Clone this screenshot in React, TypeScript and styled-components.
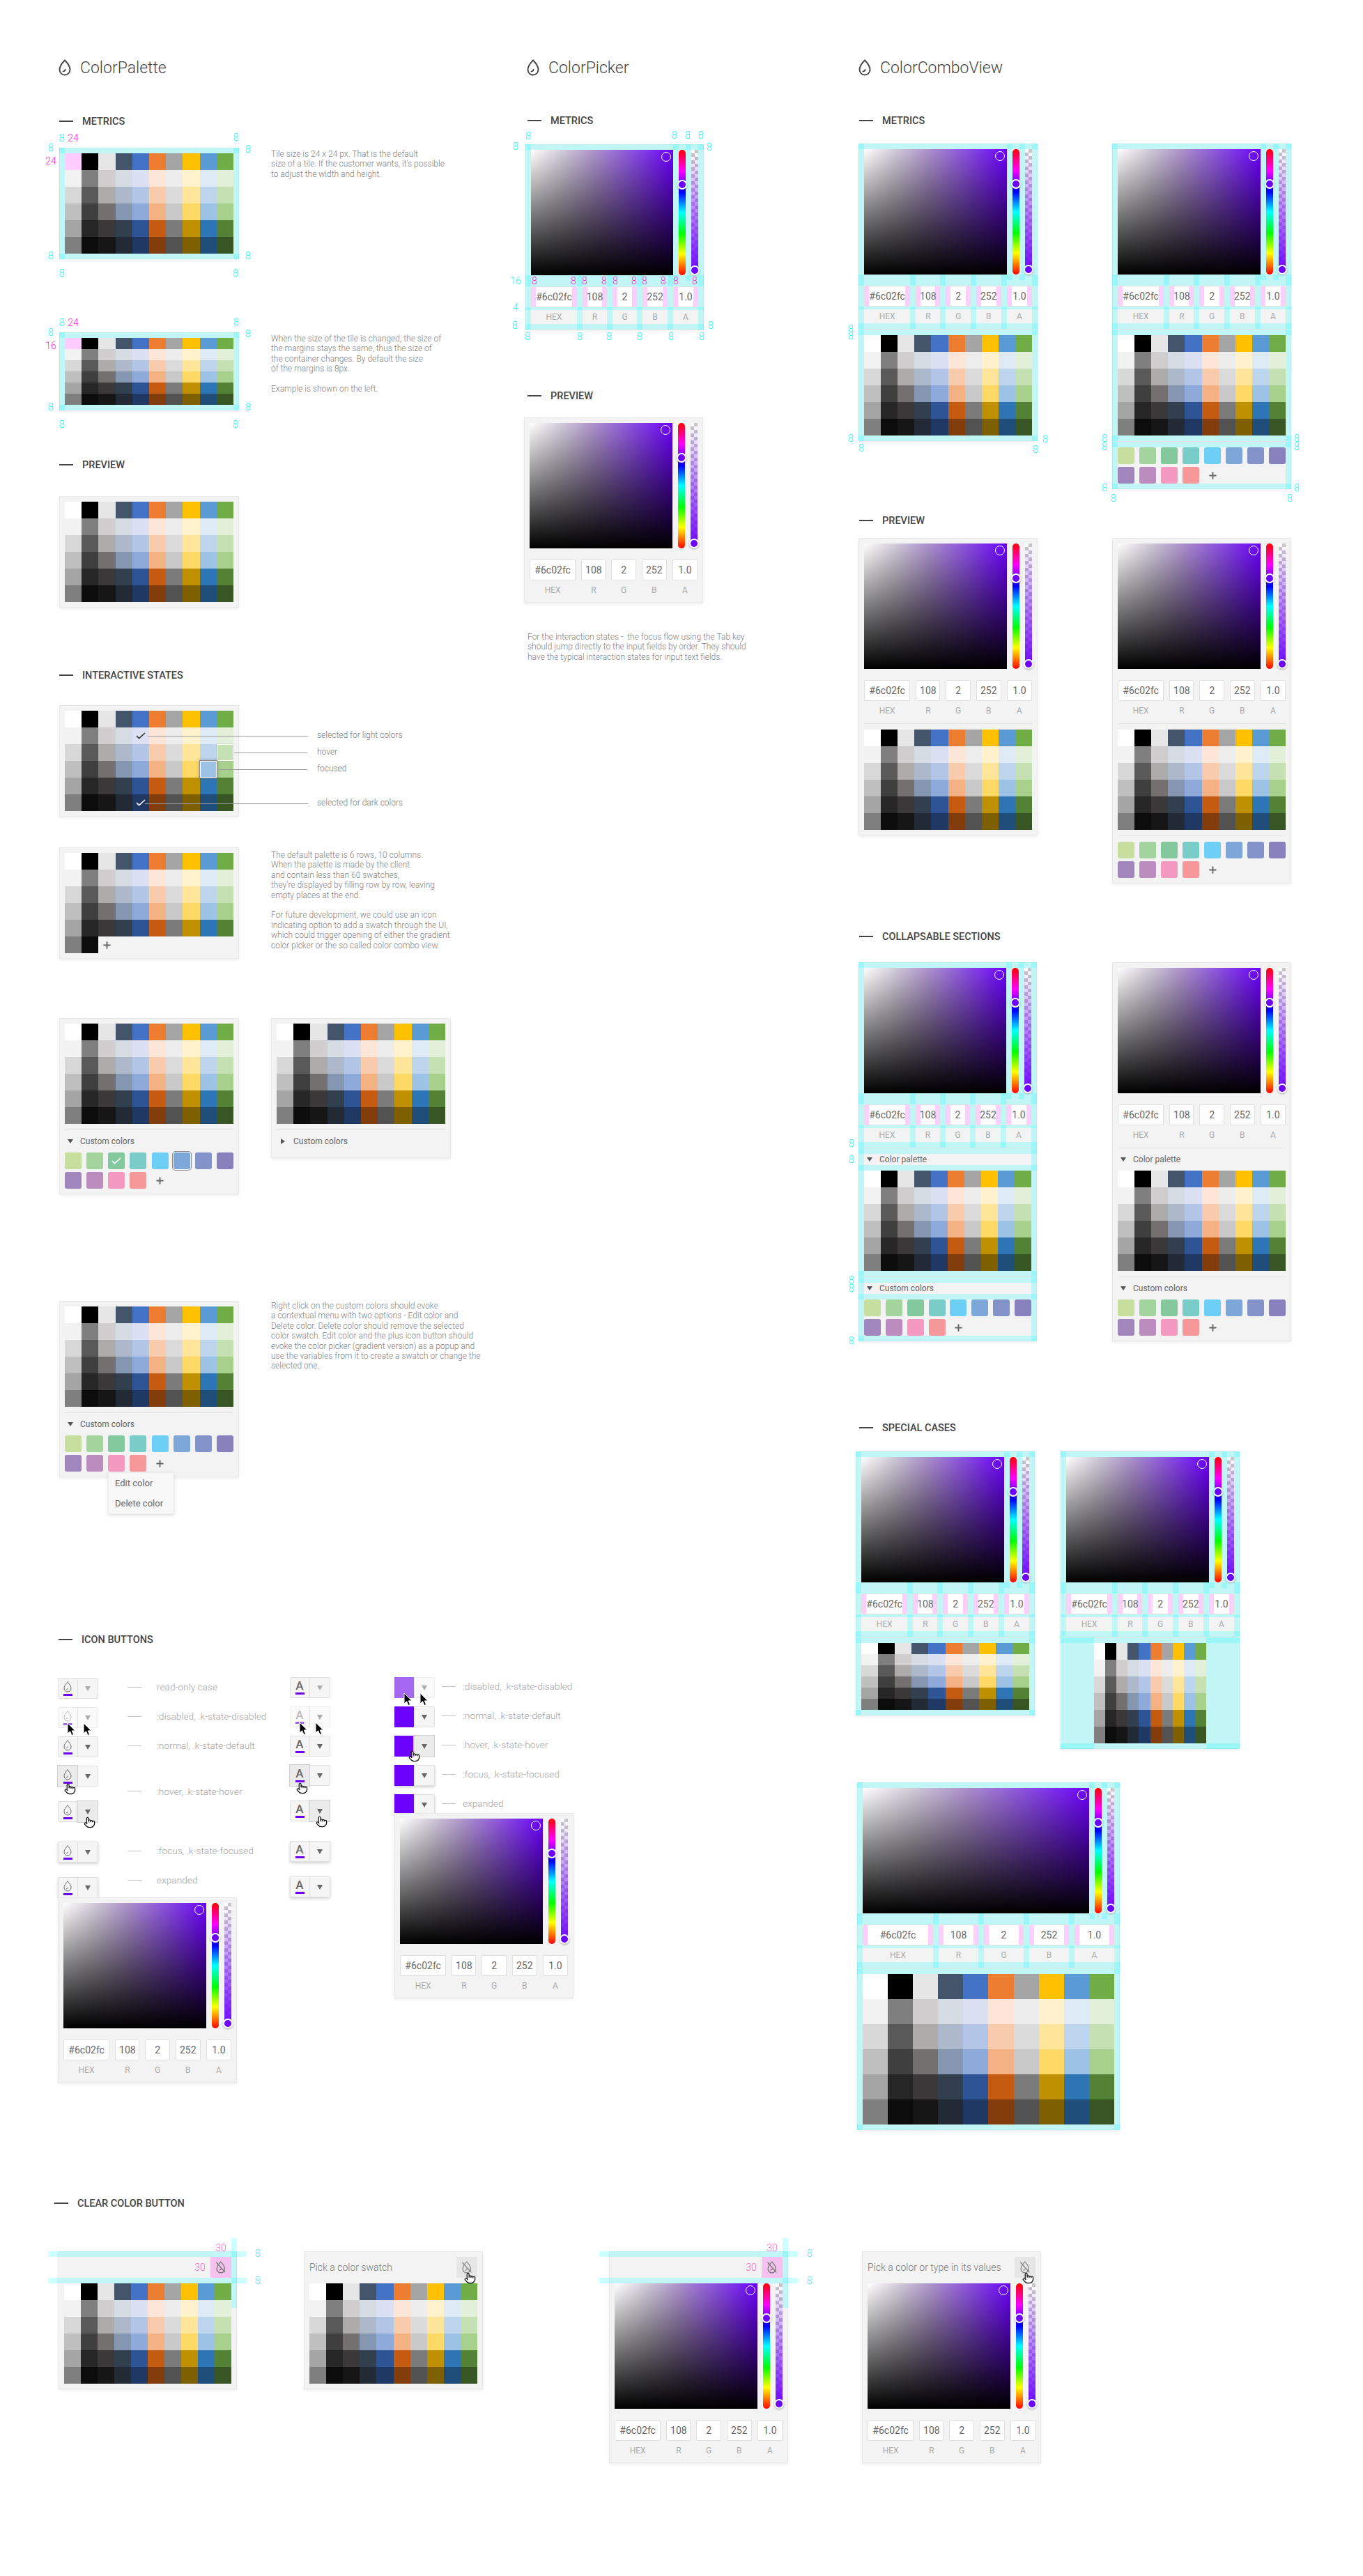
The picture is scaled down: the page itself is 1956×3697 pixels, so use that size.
import * as React from 'react';
import styled, { createGlobalStyle } from 'styled-components';
import { Plus, Pointer } from 'lucide-react';

const GlobalStyle = createGlobalStyle`
  html, body { margin: 0; padding: 0; background: #fff; }
  body { font-family: Roboto, "Liberation Sans", sans-serif; }
  * { box-sizing: border-box; }
`;

const PURPLE = '#6c02fc';
const PALETTE = [
  ['#ffffff', '#000000', '#e7e6e6', '#44546a', '#4472c4', '#ed7d31', '#a5a5a5', '#ffc000', '#5b9bd5', '#70ad47'],
  ['#f2f2f2', '#7f7f7f', '#d0cece', '#d6dce4', '#dbe1f3', '#fde5d8', '#ededed', '#fff2cc', '#deeaf6', '#e2efd9'],
  ['#d8d8d8', '#595959', '#aeabab', '#adb9ca', '#b4c6e7', '#f7cbac', '#dbdbdb', '#fee599', '#bdd6ee', '#c5e0b3'],
  ['#bfbfbf', '#3f3f3f', '#757070', '#8496b0', '#8eaadb', '#f4b183', '#c9c9c9', '#ffd965', '#9cc2e5', '#a8d08d'],
  ['#a5a5a5', '#262626', '#3a3838', '#323f4f', '#2f5496', '#c55a11', '#7b7b7b', '#bf9000', '#2e75b5', '#538135'],
  ['#7f7f7f', '#0c0c0c', '#171616', '#222a35', '#1f3864', '#833c0b', '#525252', '#7f6000', '#1e4e79', '#375623'],
];
const CUSTOM = ['#c6df9e', '#a3d49e', '#84c99e', '#7accc8', '#6dcff6', '#7da7d9', '#8393ca', '#8781bd', '#a186be', '#bd8cbf', '#f49ac1', '#f69799'];
const DEFAULT_FIELDS = [66, 35, 35, 36, 36];
const GRAD_H = 180;
const LABEL_END = GRAD_H + 78;

const Board = styled.div`
  width: 1956px;
  height: 3697px;
  overflow: hidden;
  padding: 84px 0 0 78px;
  background: #fff;
`;

const MainArea = styled.div`
  display: flex;
  align-items: flex-start;
`;

const LeftArea = styled.div`
  width: 1154px;
  flex: none;
`;

const TopColumns = styled.div`
  display: flex;
  align-items: flex-start;
`;

const PaletteColumn = styled.div`
  width: 676px;
  flex: none;
  padding-left: 7px;
`;

const PickerColumn = styled.div`
  flex: 1;
`;

const ComboColumn = styled.div`
  flex: 1;
`;

const TitleRow = styled.div<{ $indent?: number }>`
  display: flex;
  align-items: center;
  gap: 13px;
  height: 26px;
  margin-left: ${(p) => p.$indent ?? 0}px;
  font-size: 23px;
  font-weight: 300;
  color: #444;
`;

const Heading = styled.div<{ $mt: number; $indent?: number }>`
  display: flex;
  align-items: center;
  gap: 13px;
  height: 18px;
  margin-top: ${(p) => p.$mt}px;
  margin-left: ${(p) => p.$indent ?? 0}px;
  font-size: 14.5px;
  font-weight: 500;
  color: #444;
  white-space: nowrap;
  &::before {
    content: '';
    width: 20px;
    height: 2px;
    background: #444;
  }
`;

const Row = styled.div<{ $mt: number; $gap?: number; $indent?: number }>`
  display: flex;
  align-items: flex-start;
  gap: ${(p) => p.$gap ?? 46}px;
  margin-top: ${(p) => p.$mt}px;
  margin-left: ${(p) => p.$indent ?? 0}px;
`;

const Note = styled.div<{ $pt?: number; $mt?: number; $indent?: number }>`
  padding-top: ${(p) => p.$pt ?? 0}px;
  margin-top: ${(p) => p.$mt ?? 0}px;
  margin-left: ${(p) => p.$indent ?? 0}px;
  font-size: 12px;
  line-height: 14.4px;
  font-weight: 300;
  color: #808080;
  white-space: pre;
`;

const Overlay = styled.div<{ $l: number; $t: number }>`
  position: absolute;
  left: ${(p) => p.$l}px;
  top: ${(p) => p.$t}px;
`;

const Dim = styled(Overlay)<{ $tone: 'cyan' | 'pink' | 'soft' | 'sky' }>`
  font-size: 14px;
  font-weight: 300;
  line-height: 16px;
  transform: translate(-50%, -50%);
  color: ${(p) => ({ cyan: '#22f4f4', pink: '#ff28d8', soft: '#ff66cc', sky: '#66e0ff' })[p.$tone]};
`;

const Card = styled.div<{ $w: number; $mt?: number; $indent?: number }>`
  position: relative;
  flex: none;
  width: ${(p) => p.$w}px;
  margin-top: ${(p) => p.$mt ?? 0}px;
  margin-left: ${(p) => p.$indent ?? 0}px;
  display: flex;
  flex-direction: column;
  padding: 8px;
  background: #f3f3f3;
  box-shadow: inset 0 0 0 1px #e9e9e9, 0 2px 4px rgba(0, 0, 0, 0.07);
`;

const Strip = styled.div<{ $l: number; $t: number; $w: number; $h: number }>`
  position: absolute;
  left: ${(p) => p.$l}px;
  top: ${(p) => p.$t}px;
  width: ${(p) => p.$w}px;
  height: ${(p) => p.$h}px;
  background: rgba(0, 255, 255, 0.2);
  pointer-events: none;
`;

const TileGrid = styled.div<{ $rowH: number; $w?: number }>`
  display: grid;
  grid-template-columns: repeat(10, 1fr);
  grid-auto-rows: ${(p) => p.$rowH}px;
  ${(p) => (p.$w ? `width: ${p.$w}px; align-self: center;` : '')}
`;

const Tile = styled.div<{ $color: string; $state?: 'hover' | 'focus' }>`
  position: relative;
  display: flex;
  align-items: center;
  justify-content: center;
  background: ${(p) => p.$color};
  ${(p) => p.$state === 'hover' && 'z-index: 1; box-shadow: inset 0 0 0 1px #fff, 0 0 0 1px rgba(150,150,150,0.25);'}
  ${(p) => p.$state === 'focus' && 'z-index: 1; box-shadow: inset 0 0 0 1px #fff, 0 0 0 1px #888, 0 0 4px 2px rgba(110,110,110,0.35);'}
`;

const PlusCell = styled.div`
  display: flex;
  align-items: center;
  justify-content: center;
  color: #666;
`;

const PickerTop = styled.div`
  display: flex;
  gap: 8px;
  height: ${GRAD_H}px;
  margin-bottom: 16px;
`;

const Gradient = styled.div`
  position: relative;
  flex: 1;
  background: linear-gradient(to top, #000, rgba(0, 0, 0, 0)),
    linear-gradient(to right, #fff 0%, #d2cbda 22%, #ad92cc 45%, #8b4fe0 72%, ${PURPLE} 100%);
`;

const Selector = styled.div`
  position: absolute;
  top: 3px;
  right: 3px;
  width: 14px;
  height: 14px;
  border-radius: 50%;
  border: 1px solid #fff;
`;

const Hue = styled.div`
  position: relative;
  width: 10px;
  border-radius: 5px;
  background: linear-gradient(to bottom, #f00 0%, #f0f 17%, #00f 34%, #0ff 50%, #0f0 67%, #ff0 83%, #f00 100%);
`;

const Alpha = styled.div`
  position: relative;
  width: 10px;
  border-radius: 0 0 5px 5px;
  background: linear-gradient(to bottom, rgba(108, 2, 252, 0) 0%, ${PURPLE} 100%),
    repeating-conic-gradient(#c8c8c8 0 25%, #fff 0 50%) 0 0 / 10px 10px;
`;

const Thumb = styled.div<{ $top: number }>`
  position: absolute;
  left: -2px;
  top: ${(p) => p.$top}px;
  width: 14px;
  height: 14px;
  border-radius: 50%;
  border: 2.5px solid #fff;
  background: ${PURPLE};
  box-shadow: 0 1px 3px rgba(0, 0, 0, 0.3);
`;

const FieldRow = styled.div<{ $cols: string }>`
  display: grid;
  grid-template-columns: ${(p) => p.$cols};
  column-gap: 8px;
`;

const Field = styled.div<{ $spec?: boolean }>`
  height: 30px;
  margin-bottom: 4px;
  display: flex;
  align-items: center;
  justify-content: center;
  background: #fff;
  border: 1px solid #e0e0e0;
  border-radius: 2px;
  font-size: 14px;
  color: #666;
  ${(p) => p.$spec && 'box-shadow: inset 6px 0 0 #fccfff, inset -6px 0 0 #fccfff;'}
`;

const FieldLabel = styled.div`
  height: 20px;
  line-height: 20px;
  text-align: center;
  font-size: 12px;
  color: #aaa;
`;

const Rule = styled.div`
  height: 1px;
  margin: 8px 0;
  background: #e2e2e2;
`;

const Disclosure = styled.div<{ $open?: boolean }>`
  display: flex;
  align-items: center;
  gap: 10px;
  height: 16px;
  margin-bottom: 8px;
  padding-left: 4px;
  font-size: 12px;
  color: #666;
  background: #f3f3f3;
  &::before {
    content: '';
    width: 0;
    height: 0;
    ${(p) =>
      p.$open
        ? 'border-left: 4px solid transparent; border-right: 4px solid transparent; border-top: 6px solid #555;'
        : 'margin: 0 2px; border-top: 4px solid transparent; border-bottom: 4px solid transparent; border-left: 6px solid #555;'}
  }
`;

const SwatchGrid = styled.div`
  display: grid;
  grid-template-columns: repeat(8, 24px);
  grid-auto-rows: 24px;
  justify-content: space-between;
  row-gap: 4px;
`;

const Swatch = styled.div<{ $color: string; $focused?: boolean }>`
  display: flex;
  align-items: center;
  justify-content: center;
  border-radius: 3px;
  background: ${(p) => p.$color};
  ${(p) => p.$focused && 'box-shadow: 0 0 0 1px #fff, 0 0 0 2px #888;'}
`;

const ContextMenu = styled(Overlay)`
  width: 95px;
  height: 60px;
  z-index: 2;
  display: flex;
  flex-direction: column;
  justify-content: space-around;
  padding: 0 9px;
  background: #f8f8f8;
  border: 1px solid #ececec;
  box-shadow: 0 2px 5px rgba(0, 0, 0, 0.12);
  font-size: 13px;
  color: #666;
`;

const Leader = styled(Overlay)<{ $w: number }>`
  width: ${(p) => p.$w}px;
  height: 1px;
  background: #999;
  z-index: 1;
`;

const CalloutText = styled(Overlay)`
  font-size: 12px;
  font-weight: 300;
  line-height: 14px;
  color: #777;
  white-space: nowrap;
  transform: translateY(-50%);
`;

const StateText = styled.div<{ $before: number; $after: number; $lift?: number }>`
  display: flex;
  align-items: center;
  height: 18px;
  margin-left: ${(p) => p.$before}px;
  transform: translateY(${(p) => -(p.$lift ?? 2)}px);
  font-size: 13.7px;
  font-weight: 300;
  color: #a3a3a3;
  white-space: nowrap;
  &::before {
    content: '';
    width: 20px;
    height: 1px;
    background: #c4c4c4;
    margin-right: ${(p) => p.$after}px;
  }
`;

const ButtonsArea = styled.div`
  display: grid;
  grid-template-columns: 333px 150px 1fr;
  margin-top: 45px;
  padding-left: 5px;
`;

const ButtonStack = styled.div<{ $pt?: number }>`
  display: flex;
  flex-direction: column;
  gap: 12px;
  padding-top: ${(p) => p.$pt ?? 0}px;
`;

const ButtonRow = styled.div<{ $mt?: number }>`
  display: flex;
  align-items: center;
  margin-top: ${(p) => p.$mt ?? 0}px;
`;

const HoverStack = styled.div`
  display: flex;
  flex-direction: column;
  gap: 21px;
`;

const SplitButton = styled.div<{ $raised?: boolean; $dim?: boolean }>`
  position: relative;
  flex: none;
  width: 58px;
  height: 30px;
  display: flex;
  border: 1px solid ${(p) => (p.$dim ? '#ededed' : '#e0e0e0')};
  border-radius: 2px;
  background: ${(p) => (p.$dim ? '#fafafa' : '#f5f5f5')};
  ${(p) => p.$raised && 'box-shadow: 0 2px 4px rgba(0,0,0,0.18);'}
`;

const Segment = styled.div<{ $hover?: boolean; $fill?: string }>`
  position: relative;
  flex: 1;
  display: flex;
  flex-direction: column;
  align-items: center;
  justify-content: center;
  gap: 2px;
  margin: -1px 0;
  border-left: 1px solid #e0e0e0;
  &:first-child { border-left: 0; margin-left: -1px; }
  ${(p) => p.$hover && 'background: #ebebeb; box-shadow: 0 0 0 1px #cfcfcf; z-index: 1;'}
  ${(p) => p.$fill && `background: ${p.$fill}; border-color: ${p.$fill};`}
`;

const GlyphA = styled.span<{ $dim?: boolean }>`
  font-size: 17px;
  font-weight: 500;
  line-height: 15px;
  color: ${(p) => (p.$dim ? '#bbb' : '#666')};
`;

const ColorBar = styled.span<{ $dim?: boolean }>`
  width: 13px;
  height: 3px;
  background: ${(p) => (p.$dim ? 'repeating-linear-gradient(90deg,#a566f0 0 5px,#d7bdf8 5px 7px)' : PURPLE)};
`;

const Arrow = styled.span<{ $dim?: boolean }>`
  width: 0;
  height: 0;
  border-left: 4px solid transparent;
  border-right: 4px solid transparent;
  border-top: 7px solid ${(p) => (p.$dim ? '#aaa' : '#666')};
`;

const ClearGrid = styled.div`
  display: grid;
  grid-template-columns: 352px 438px 363px 257px;
  align-items: start;
  margin: 60px 0 0 6px;
`;

const ClearHeader = styled.div`
  display: flex;
  align-items: center;
  justify-content: space-between;
  height: 30px;
  margin-bottom: 8px;
  font-size: 14px;
  font-weight: 300;
  color: #777;
`;

const ClearButton = styled.div<{ $spec?: boolean }>`
  position: relative;
  width: 30px;
  height: 30px;
  margin-left: auto;
  display: flex;
  align-items: center;
  justify-content: center;
  background: ${(p) => (p.$spec ? '#f5c2ef' : '#e6e6e6')};
`;

const CursorSpot = styled(Overlay)`
  line-height: 0;
  z-index: 3;
`;

const DropIcon = ({ size = 16, stroke = '#666', width = 1.6, slash = false }: { size?: number; stroke?: string; width?: number; slash?: boolean }) => (
  <svg width={size * 0.75} height={size} viewBox="0 0 18 24" fill="none" stroke={stroke} strokeWidth={width} strokeLinecap="round">
    <path d="M9 1.5C9 1.5 1.5 9 1.5 15a7.5 7.5 0 0 0 15 0C16.5 9 9 1.5 9 1.5z" />
    <path d="M6.5 17.5c1.6 0 2.8-.9 3-2.5" />
    {slash && <path d="M1 3l16 18" />}
  </svg>
);

const CheckMark = ({ color }: { color: string }) => (
  <svg width="14" height="10" viewBox="0 0 14 10" fill="none" stroke={color} strokeWidth="1.6">
    <path d="M1 5.2l3.6 3.4L13 1" />
  </svg>
);

const ArrowCursor = () => (
  <svg width="13" height="20" viewBox="0 0 13 20">
    <path d="M1 1v15l3.6-3.2L7 18.5l2.6-1.1-2.4-5.5H12z" fill="#000" stroke="#fff" strokeWidth="1" />
  </svg>
);

const HandCursor = () => <Pointer size={17} fill="#fff" stroke="#111" strokeWidth={1.8} />;

type TileMark = { r: number; c: number; node?: React.ReactNode; state?: 'hover' | 'focus' };

const Tiles = ({ rowH, w, pink, marks = [], partial }: { rowH: number; w?: number; pink?: boolean; marks?: TileMark[]; partial?: boolean }) => (
  <TileGrid $rowH={rowH} $w={w}>
    {PALETTE.flatMap((row, r) =>
      row.map((color, c) => {
        if (partial && r === 5 && c === 2) return <PlusCell key="plus"><Plus size={15} strokeWidth={3} /></PlusCell>;
        if (partial && r === 5 && c > 2) return <div key={c + 'x'} />;
        const mark = marks.find((m) => m.r === r && m.c === c);
        return (
          <Tile key={`${r}-${c}`} $color={pink && r === 0 && c === 0 ? '#ffccff' : color} $state={mark?.state}>
            {mark?.node}
          </Tile>
        );
      }),
    )}
  </TileGrid>
);

const Swatches = ({ checked, focused }: { checked?: number; focused?: number }) => (
  <SwatchGrid>
    {CUSTOM.map((color, i) => (
      <Swatch key={color} $color={color} $focused={i === focused}>
        {i === checked && <CheckMark color="#fff" />}
      </Swatch>
    ))}
    <PlusCell><Plus size={15} strokeWidth={3} /></PlusCell>
  </SwatchGrid>
);

const Picker = ({ fields, spec }: { fields: number[]; spec?: boolean }) => {
  const cols = fields.map((f) => `${f}fr`).join(' ');
  return (
    <>
      <PickerTop>
        <Gradient><Selector /></Gradient>
        <Hue><Thumb $top={43} /></Hue>
        <Alpha><Thumb $top={166} /></Alpha>
      </PickerTop>
      <FieldRow $cols={cols}>
        {['#6c02fc', '108', '2', '252', '1.0'].map((v) => <Field key={v} $spec={spec}>{v}</Field>)}
        {['HEX', 'R', 'G', 'B', 'A'].map((v) => <FieldLabel key={v}>{v}</FieldLabel>)}
      </FieldRow>
    </>
  );
};

type Rect = [number, number, number, number];

// measurement bands drawn over a picker card, overlaps go darker by themselves
const pickerBands = (w: number, h: number, fields: number[], rows: number[][], sideEnd = h): Rect[] => {
  const inner = w - 16 - 32;
  const total = fields.reduce((a, b) => a + b, 0);
  const out: Rect[] = [
    [0, 0, 8, sideEnd],
    [w - 8, 0, 8, sideEnd],
    [w - 44, 0, 8, GRAD_H + 16],
    [w - 26, 0, 8, GRAD_H + 16],
    [0, 0, w, 8],
    [0, GRAD_H + 8, w, 16],
    [0, GRAD_H + 54, w, 4],
    [0, LABEL_END, w, 8],
  ];
  let x = 8;
  fields.slice(0, 4).forEach((f) => {
    x += (f / total) * inner;
    out.push([x, GRAD_H + 8, 8, LABEL_END - GRAD_H]);
    x += 8;
  });
  rows.forEach(([t, hh]) => out.push([0, t, w, hh]));
  return out;
};

const Bands = ({ rects }: { rects: Rect[] }) => (
  <>
    {rects.map(([l, t, w, h], i) => <Strip key={i} $l={l} $t={t} $w={w} $h={h} />)}
  </>
);

type DimPoint = [string, number, number];

const Dims = ({ tone, pts }: { tone: 'cyan' | 'pink' | 'soft' | 'sky'; pts: DimPoint[] }) => (
  <>
    {pts.map(([t, x, y], i) => <Dim key={i} $tone={tone} $l={x} $t={y}>{t}</Dim>)}
  </>
);

const PaletteDims = ({ label, h, w }: { label: string; h: number; w: number }) => (
  <>
    <Dims tone="cyan" pts={[
      ['8', 4, -14], ['8', w - 4, -15], ['8', -12, 0], ['8', w + 13, 2],
      ['8', -12, h - 5], ['8', w + 13, h - 5], ['8', 4, h + 20], ['8', w - 5, h + 20],
    ]} />
    <Dims tone="pink" pts={[['24', 20, -14], [label, -12, 19]]} />
  </>
);

const PaletteCard = ({ rowH = 24, pink, spec, marks, partial, w = 258, overlay, children }: {
  rowH?: number; pink?: boolean; spec?: boolean; marks?: TileMark[]; partial?: boolean; w?: number; overlay?: React.ReactNode; children?: React.ReactNode;
}) => {
  const h = rowH * 6 + 16;
  return (
    <Card $w={w}>
      <Tiles rowH={rowH} pink={pink} marks={marks} partial={partial} />
      {children}
      {spec && <Bands rects={[[0, 0, 8, h], [w - 8, 0, 8, h], [0, 0, w, 8], [0, h - 8, w, 8]]} />}
      {overlay}
    </Card>
  );
};

const PickerCard = ({ w = 257, fields = DEFAULT_FIELDS, spec, below, bands, mt, indent, overlay }: {
  w?: number; fields?: number[]; spec?: boolean; below?: React.ReactNode; bands?: Rect[]; mt?: number; indent?: number; overlay?: React.ReactNode;
}) => (
  <Card $w={w} $mt={mt} $indent={indent}>
    <Picker fields={fields} spec={spec} />
    {below}
    {bands && <Bands rects={bands} />}
    {overlay}
  </Card>
);

const ComboBelow = ({ rowH = 24, tileW, swatches }: { rowH?: number; tileW?: number; swatches?: boolean }) => (
  <>
    <Rule />
    <Tiles rowH={rowH} w={tileW} />
    {swatches && (
      <>
        <Rule />
        <Swatches />
      </>
    )}
  </>
);

const SectionsBelow = () => (
  <>
    <Rule />
    <Disclosure $open>Color palette</Disclosure>
    <Tiles rowH={24} />
    <Rule />
    <Disclosure $open>Custom colors</Disclosure>
    <Swatches />
  </>
);

type ButtonState = 'read' | 'disabled' | 'normal' | 'hoverL' | 'hoverR' | 'focus' | 'expanded';

const IconSplit = ({ kind, state }: { kind: 'drop' | 'text' | 'color'; state: ButtonState }) => {
  const dim = state === 'disabled';
  const raised = state === 'focus' || state === 'expanded';
  return (
    <SplitButton $raised={raised} $dim={dim}>
      <Segment $hover={state === 'hoverL'} $fill={kind === 'color' ? (dim ? '#a566f0' : PURPLE) : undefined}>
        {kind === 'drop' && <DropIcon size={16} stroke={dim ? '#bbb' : '#666'} width={1.5} />}
        {kind === 'text' && <GlyphA $dim={dim}>A</GlyphA>}
        {kind !== 'color' && <ColorBar $dim={dim} />}
      </Segment>
      <Segment $hover={state === 'hoverR'}>
        <Arrow $dim={dim || state === 'read'} />
      </Segment>
      {dim && (
        <>
          <CursorSpot $l={12} $t={21}><ArrowCursor /></CursorSpot>
          <CursorSpot $l={35} $t={21}><ArrowCursor /></CursorSpot>
        </>
      )}
      {state === 'hoverL' && <CursorSpot $l={8} $t={24}><HandCursor /></CursorSpot>}
      {state === 'hoverR' && (
        <CursorSpot $l={kind === 'color' ? 19 : 36} $t={kind === 'color' ? 20 : 21}><HandCursor /></CursorSpot>
      )}
    </SplitButton>
  );
};

const Title = ({ indent, children }: { indent?: number; children: string }) => (
  <TitleRow $indent={indent}>
    <DropIcon size={24} stroke="#444" width={1.9} />
    {children}
  </TitleRow>
);

const StateLabel = ({ lift, children }: { lift?: number; children: string }) => (
  <StateText $before={42} $after={22} $lift={lift}>{children}</StateText>
);

const ColorStateLabel = ({ children }: { children: string }) => (
  <StateText $before={10} $after={10}>{children}</StateText>
);

const App = () => {
  const comboH = LABEL_END + 17 + 144 + 8;
  const comboSwatchH = comboH + 69;
  const bigFields = [101, 57, 57, 57, 57];
  const specialH = LABEL_END + 17 + 96 + 8;
  const bigH = LABEL_END + 17 + 216 + 8;
  const sectionsH = LABEL_END + 17 + 24 + 144 + 17 + 24 + 52 + 8;

  return (
    <Board>
      <GlobalStyle />
      <MainArea>
        <LeftArea>
          <TopColumns>
            <PaletteColumn>
              <Title indent={-1}>ColorPalette</Title>
              <Heading $mt={55}>METRICS</Heading>
              <Row $mt={29}>
                <PaletteCard pink spec overlay={<PaletteDims label="24" h={160} w={258} />} />
                <Note $pt={2}>{"Tile size is 24 x 24 px. That is the default\nsize of a tile. If the customer wants, it's possible\nto adjust the width and height."}</Note>
              </Row>
              <Row $mt={105}>
                <PaletteCard rowH={16} pink spec overlay={<PaletteDims label="16" h={112} w={258} />} />
                <Note $pt={2}>{'When the size of the tile is changed, the size of\nthe margins stays the same, thus the size of\nthe container changes. By default the size\nof the margins is 8px.\n\nExample is shown on the left.'}</Note>
              </Row>

              <Heading $mt={69}>PREVIEW</Heading>
              <Row $mt={36}><PaletteCard /></Row>

              <Heading $mt={88}>INTERACTIVE STATES</Heading>
              <Row $mt={34}>
                <PaletteCard
                  marks={[
                    { r: 1, c: 4, node: <CheckMark color="#333" /> },
                    { r: 5, c: 4, node: <CheckMark color="#fff" /> },
                    { r: 2, c: 9, state: 'hover' },
                    { r: 3, c: 8, state: 'focus' },
                  ]}
                  overlay={
                    <>
                      <Leader $l={127} $t={44} $w={230} />
                      <Leader $l={251} $t={68} $w={105} />
                      <Leader $l={229} $t={92} $w={127} />
                      <Leader $l={123} $t={141} $w={234} />
                      <CalloutText $l={370} $t={43}>selected for light colors</CalloutText>
                      <CalloutText $l={370} $t={67}>hover</CalloutText>
                      <CalloutText $l={370} $t={91}>focused</CalloutText>
                      <CalloutText $l={370} $t={140}>selected for dark colors</CalloutText>
                    </>
                  }
                />
              </Row>
              <Row $mt={44}>
                <PaletteCard partial />
                <Note $pt={4}>{"The default palette is 6 rows, 10 columns.\nWhen the palette is made by the client\nand contain less than 60 swatches,\nthey're displayed by filling row by row, leaving\nempty places at the end.\n\nFor future development, we could use an icon\nindicating option to add a swatch through the UI,\nwhich could trigger opening of either the gradient\ncolor picker or the so called color combo view."}</Note>
              </Row>
              <Row $mt={85}>
                <PaletteCard>
                  <Rule />
                  <Disclosure $open>Custom colors</Disclosure>
                  <Swatches checked={2} focused={5} />
                </PaletteCard>
                <PaletteCard>
                  <Rule />
                  <Disclosure>Custom colors</Disclosure>
                </PaletteCard>
              </Row>
              <Row $mt={153}>
                <PaletteCard
                  overlay={
                    <ContextMenu $l={70} $t={246}>
                      <span>Edit color</span>
                      <span>Delete color</span>
                    </ContextMenu>
                  }
                >
                  <Rule />
                  <Disclosure $open>Custom colors</Disclosure>
                  <Swatches />
                </PaletteCard>
                <Note>{'Right click on the custom colors should evoke\na contextual menu with two options - Edit color and\nDelete color. Delete color should remove the selected\ncolor swatch. Edit color and the plus icon button should\nevoke the color picker (gradient version) as a popup and\nuse the variables from it to create a swatch or change the\nselected one.'}</Note>
              </Row>
            </PaletteColumn>

            <PickerColumn>
              <Title indent={2}>ColorPicker</Title>
              <Heading $mt={54} $indent={3}>METRICS</Heading>
              <PickerCard
                mt={25}
                w={256}
                spec
                bands={pickerBands(256, 266, DEFAULT_FIELDS, [])}
                overlay={
                  <>
                    <Dims tone="cyan" pts={[
                      ['8', 4, -12], ['8', 214, -13], ['8', 233, -13], ['8', 252, -13], ['8', -14, 3], ['8', 264, 4],
                      ['16', -14, 196], ['4', -14, 234], ['8', -15, 260], ['8', 266, 260],
                      ['8', 3, 276], ['8', 78, 276], ['8', 120, 276], ['8', 164, 276], ['8', 209, 276], ['8', 253, 276],
                    ]} />
                    <Dims tone="pink" pts={[13, 69, 85, 113, 129, 156, 171, 198, 216, 243].map((x) => ['8', x, 196] as DimPoint)} />
                  </>
                }
              />
              <Heading $mt={86} $indent={3}>PREVIEW</Heading>
              <PickerCard mt={22} indent={-2} />
              <Note $mt={42} $indent={3}>{'For the interaction states -  the focus flow using the Tab key\nshould jump directly to the input fields by order. They should\nhave the typical interaction states for input text fields.'}</Note>
            </PickerColumn>
          </TopColumns>

          <Heading $mt={224} $indent={6}>ICON BUTTONS</Heading>
          <ButtonsArea>
            <ButtonStack $pt={1}>
              <ButtonRow><IconSplit kind="drop" state="read" /><StateLabel>read-only case</StateLabel></ButtonRow>
              <ButtonRow><IconSplit kind="drop" state="disabled" /><StateLabel>:disabled, .k-state-disabled</StateLabel></ButtonRow>
              <ButtonRow><IconSplit kind="drop" state="normal" /><StateLabel>:normal, .k-state-default</StateLabel></ButtonRow>
              <ButtonRow>
                <HoverStack>
                  <IconSplit kind="drop" state="hoverL" />
                  <IconSplit kind="drop" state="hoverR" />
                </HoverStack>
                <StateLabel lift={4}>:hover, .k-state-hover</StateLabel>
              </ButtonRow>
              <ButtonRow $mt={16}><IconSplit kind="drop" state="focus" /><StateLabel>:focus, .k-state-focused</StateLabel></ButtonRow>
              <ButtonRow $mt={9}><IconSplit kind="drop" state="expanded" /><StateLabel lift={11}>expanded</StateLabel></ButtonRow>
              <PickerCard mt={-13} />
            </ButtonStack>
            <ButtonStack>
              <ButtonRow><IconSplit kind="text" state="read" /></ButtonRow>
              <ButtonRow><IconSplit kind="text" state="disabled" /></ButtonRow>
              <ButtonRow><IconSplit kind="text" state="normal" /></ButtonRow>
              <HoverStack>
                <IconSplit kind="text" state="hoverL" />
                <IconSplit kind="text" state="hoverR" />
              </HoverStack>
              <ButtonRow $mt={16}><IconSplit kind="text" state="focus" /></ButtonRow>
              <ButtonRow $mt={9}><IconSplit kind="text" state="expanded" /></ButtonRow>
            </ButtonStack>
            <ButtonStack>
              <ButtonRow><IconSplit kind="color" state="disabled" /><ColorStateLabel>:disabled, .k-state-disabled</ColorStateLabel></ButtonRow>
              <ButtonRow><IconSplit kind="color" state="normal" /><ColorStateLabel>:normal, .k-state-default</ColorStateLabel></ButtonRow>
              <ButtonRow><IconSplit kind="color" state="hoverR" /><ColorStateLabel>:hover, .k-state-hover</ColorStateLabel></ButtonRow>
              <ButtonRow><IconSplit kind="color" state="focus" /><ColorStateLabel>:focus, .k-state-focused</ColorStateLabel></ButtonRow>
              <ButtonRow><IconSplit kind="color" state="expanded" /><ColorStateLabel>expanded</ColorStateLabel></ButtonRow>
              <PickerCard mt={-15} />
            </ButtonStack>
          </ButtonsArea>
        </LeftArea>

        <ComboColumn>
          <Title>ColorComboView</Title>
          <Heading $mt={54} $indent={1}>METRICS</Heading>
          <Row $mt={24} $gap={107}>
            <PickerCard
              spec
              below={<ComboBelow />}
              bands={pickerBands(257, comboH, DEFAULT_FIELDS, [[LABEL_END + 9, 8], [comboH - 8, 8]])}
              overlay={<Dims tone="cyan" pts={[['8', -11, 266], ['8', -11, 276], ['8', -11, 423], ['8', 268, 424], ['8', 4, 437], ['8', 254, 439]]} />}
            />
            <PickerCard
              spec
              below={<ComboBelow swatches />}
              bands={pickerBands(257, comboSwatchH, DEFAULT_FIELDS, [[LABEL_END + 9, 8], [comboH - 8, 8], [comboH + 1, 8], [comboSwatchH - 8, 8]])}
              overlay={<Dims tone="cyan" pts={[['8', -11, 423], ['8', -11, 435], ['8', 265, 423], ['8', 265, 435], ['8', -11, 494], ['8', 265, 494], ['8', 2, 509], ['8', 255, 509]]} />}
            />
          </Row>

          <Heading $mt={36} $indent={1}>PREVIEW</Heading>
          <Row $mt={16} $gap={107}>
            <PickerCard below={<ComboBelow />} />
            <PickerCard below={<ComboBelow swatches />} />
          </Row>

          <Heading $mt={67} $indent={1}>COLLAPSABLE SECTIONS</Heading>
          <Row $mt={28} $gap={108}>
            <PickerCard
              w={256}
              spec
              below={<SectionsBelow />}
              bands={pickerBands(256, sectionsH, DEFAULT_FIELDS, [
                [LABEL_END + 9, 8], [LABEL_END + 33, 8], [LABEL_END + 185, 8], [LABEL_END + 194, 8], [LABEL_END + 218, 8], [sectionsH - 8, 8],
              ])}
              overlay={<Dims tone="cyan" pts={[['8', -10, 260], ['8', -10, 283], ['8', -10, 456], ['8', -10, 468], ['8', -10, 543]]} />}
            />
            <PickerCard below={<SectionsBelow />} />
          </Row>

          <Heading $mt={115} $indent={1}>SPECIAL CASES</Heading>
          <Row $mt={25} $gap={37} $indent={-4}>
            <PickerCard
              spec
              below={<ComboBelow rowH={16} />}
              bands={pickerBands(257, specialH, DEFAULT_FIELDS, [[LABEL_END + 9, 8], [specialH - 8, 8]])}
            />
            <PickerCard
              spec
              below={<ComboBelow tileW={161} />}
              bands={[
                ...pickerBands(257, comboH, DEFAULT_FIELDS, [[LABEL_END + 9, 8], [comboH - 8, 8]], LABEL_END + 8),
                [0, LABEL_END + 9, 48, comboH - LABEL_END - 9],
                [209, LABEL_END + 9, 48, comboH - LABEL_END - 9],
              ]}
            />
          </Row>
          <PickerCard
            mt={48}
            indent={-2}
            w={377}
            fields={bigFields}
            spec
            below={<ComboBelow rowH={36} />}
            bands={pickerBands(377, bigH, bigFields, [[LABEL_END + 9, 8], [bigH - 8, 8]])}
          />
        </ComboColumn>
      </MainArea>

      <Heading $mt={96}>CLEAR COLOR BUTTON</Heading>
      <ClearGrid>
        <Card $w={256}>
          <ClearHeader><ClearButton $spec><DropIcon size={18} stroke="#777" width={1.8} slash /></ClearButton></ClearHeader>
          <Tiles rowH={24} />
          <Bands rects={[[-15, 0, 285, 8], [-15, 38, 285, 8], [248, -19, 8, 100]]} />
          <Dims tone="soft" pts={[['30', 233, -5], ['30', 203, 23]]} />
          <Dims tone="sky" pts={[['8', 286, 3], ['8', 286, 42]]} />
        </Card>
        <Card $w={257}>
          <ClearHeader>
            Pick a color swatch
            <ClearButton>
              <DropIcon size={18} stroke="#888" width={1.8} slash />
              <CursorSpot $l={11} $t={22}><HandCursor /></CursorSpot>
            </ClearButton>
          </ClearHeader>
          <Tiles rowH={24} />
        </Card>
        <Card $w={257}>
          <ClearHeader><ClearButton $spec><DropIcon size={18} stroke="#777" width={1.8} slash /></ClearButton></ClearHeader>
          <Picker fields={DEFAULT_FIELDS} />
          <Bands rects={[[-14, 0, 285, 8], [-14, 38, 285, 8], [249, -19, 8, 100]]} />
          <Dims tone="soft" pts={[['30', 234, -5], ['30', 204, 23]]} />
          <Dims tone="sky" pts={[['8', 288, 3], ['8', 288, 42]]} />
        </Card>
        <Card $w={257}>
          <ClearHeader>
            Pick a color or type in its values
            <ClearButton>
              <DropIcon size={18} stroke="#888" width={1.8} slash />
              <CursorSpot $l={11} $t={22}><HandCursor /></CursorSpot>
            </ClearButton>
          </ClearHeader>
          <Picker fields={DEFAULT_FIELDS} />
        </Card>
      </ClearGrid>
    </Board>
  );
};

export default App;
